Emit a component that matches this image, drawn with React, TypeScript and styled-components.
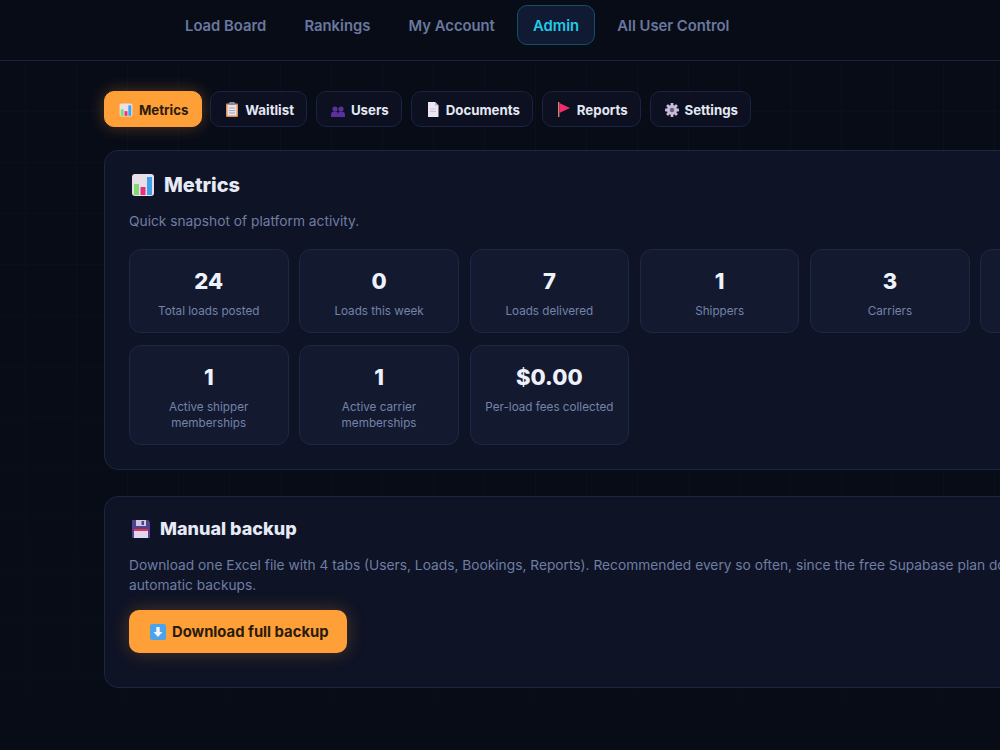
import styled, { createGlobalStyle } from 'styled-components';

const GlobalStyle = createGlobalStyle`
	html, body {
		margin: 0;
		height: 100%;
		overflow: hidden;
		background: #080c17;
	}
	body {
		font-family: Inter, "Liberation Sans", sans-serif;
	}
`;

const Shell = styled.div`
	width: 1000px;
	height: 750px;
	overflow: hidden;
	background-color: #080c17;
`;

const TopBar = styled.nav`
	height: 60px;
	box-sizing: content-box;
	display: flex;
	align-items: flex-start;
	gap: 6px;
	padding-left: 169px;
	background: #080c17;
	border-bottom: 1px solid #1a2342;
`;

const NavLink = styled.a<{ $active?: boolean }>`
	height: 40px;
	margin-top: 5px;
	box-sizing: border-box;
	display: flex;
	align-items: center;
	padding: 1px 15.1px 0;
	border-radius: 10px;
	font-size: 14.8px;
	font-weight: 600;
	white-space: nowrap;
	color: ${(p) => (p.$active ? '#22cbe8' : '#6a789f')};
	background: ${(p) => (p.$active ? '#111a33' : 'transparent')};
	border: 1px solid ${(p) => (p.$active ? '#12506a' : 'transparent')};
`;

const Main = styled.main`
	height: 689px;
	box-sizing: border-box;
	padding: 30px 0 0 104px;
	background-image: linear-gradient(180deg, transparent 45%, #080c17 95%),
		linear-gradient(90deg, rgba(50, 70, 120, 0.08) 1px, transparent 1px),
		linear-gradient(0deg, rgba(50, 70, 120, 0.03) 1px, transparent 1px);
	background-size: 100% 100%, 51px 51px, 51px 51px;
	background-position: 0 0, 25px 0, 25px 0;
`;

const Tabs = styled.div`
	display: flex;
	gap: 8.6px;
	margin-bottom: 23px;
`;

const Tab = styled.button<{ $active?: boolean }>`
	height: 36px;
	box-sizing: border-box;
	display: flex;
	align-items: center;
	gap: 6px;
	padding: 1px 12.3px 0 14px;
	border-radius: 10px;
	font-family: Inter, sans-serif;
	font-size: 13.28px;
	font-weight: 700;
	white-space: nowrap;
	color: ${(p) => (p.$active ? '#2a1c0c' : '#e4e8f4')};
	background: ${(p) => (p.$active ? '#ff9f38' : '#0c1020')};
	border: 1px solid ${(p) => (p.$active ? '#ff9f38' : '#1a2342')};
	box-shadow: ${(p) => (p.$active ? '0 0 16px rgba(255, 159, 56, 0.3)' : 'none')};
`;

const Panel = styled.section`
	width: 1061px;
	box-sizing: border-box;
	padding: 20px 24px 24px;
	margin-bottom: 26px;
	background: #0e1325;
	border: 1px solid #1c2543;
	border-radius: 14px;
`;

const PanelTitle = styled.h2<{ $small?: boolean }>`
	display: flex;
	align-items: center;
	gap: 9px;
	height: 28px;
	margin: ${(p) => (p.$small ? '-2px' : '0')} 0 0 2px;
	font-family: Inter, sans-serif;
	font-size: ${(p) => (p.$small ? '18px' : '20px')};
	font-weight: 800;
	color: #e6eaf6;
`;

const PanelText = styled.p`
	margin: 12px 0 0;
	font-size: 13.76px;
	line-height: 20.6px;
	color: #6f7da4;
`;

const MetricGrid = styled.div`
	display: grid;
	grid-template-columns: repeat(6, 1fr);
	column-gap: 10.8px;
	row-gap: 12px;
	margin-top: 17px;
`;

const MetricCard = styled.div`
	box-sizing: border-box;
	min-height: 84px;
	padding: 16px 12px 13px;
	text-align: center;
	background: #131a30;
	border: 1px solid #1e2745;
	border-radius: 12px;
`;

const MetricValue = styled.div`
	font-family: Inter, sans-serif;
	font-size: 22px;
	line-height: 30px;
	font-weight: 800;
	color: #eef1fa;
`;

const MetricLabel = styled.div`
	margin-top: 7px;
	font-size: 11.7px;
	line-height: 16px;
	color: #7482a8;
`;

const DownloadButton = styled.button`
	height: 43px;
	display: flex;
	align-items: center;
	gap: 6px;
	margin: 14px 0 10px;
	padding: 1px 18px 0 21px;
	border: none;
	border-radius: 10px;
	font-family: Inter, sans-serif;
	font-size: 14.8px;
	font-weight: 700;
	color: #2a1c0c;
	background: #ff9f38;
	box-shadow: 0 0 18px rgba(255, 159, 56, 0.25);
`;

function ChartIcon({ size }: { size: number }) {
	return (
		<svg width={size} height={size} viewBox="0 0 24 24">
			<rect x="1" y="1" width="22" height="22" rx="3" fill="#e8dfe8" />
			<rect x="3" y="11" width="5" height="11" fill="#7ddc6f" />
			<rect x="9.5" y="14" width="5" height="8" fill="#ef2f7d" />
			<rect x="16" y="4" width="5" height="18" fill="#3fa3ea" />
		</svg>
	);
}

function ClipboardIcon() {
	return (
		<svg width="14" height="15" viewBox="0 0 14 15">
			<rect x="1" y="1.5" width="12" height="13.5" rx="1" fill="#d9925a" />
			<rect x="2.5" y="3" width="9" height="10.5" fill="#e8e2ee" />
			<rect x="4" y="0" width="6" height="3" rx="1" fill="#8b8797" />
			<path d="M4 6h6M4 8.5h6M4 11h6" stroke="#a9a5b8" strokeWidth="1" />
		</svg>
	);
}

function UsersIcon() {
	return (
		<svg width="14" height="14" viewBox="0 0 14 14">
			<circle cx="4" cy="6" r="2.6" fill="#5b2f9e" />
			<circle cx="10" cy="6" r="2.6" fill="#5b2f9e" />
			<path d="M0 14v-2.5C0 9.8 1.5 8.6 4 8.6s3 1.2 3 2.9V14z" fill="#5b2f9e" />
			<path d="M7 14v-2.5c0-1.7.5-2.9 3-2.9s4 1.2 4 2.9V14z" fill="#5b2f9e" />
		</svg>
	);
}

function DocIcon() {
	return (
		<svg width="14" height="15" viewBox="0 0 14 15">
			<path d="M2 0h7l3.5 3.5V15H2z" fill="#ebe6f2" />
			<path d="M9 0l3.5 3.5H9z" fill="#b9b0cc" />
			<path d="M4 7h6M4 9.5h6" stroke="#c9c2d8" strokeWidth="1" />
		</svg>
	);
}

function FlagIcon() {
	return (
		<svg width="14" height="15" viewBox="0 0 14 15">
			<rect x="1" y="0" width="1.4" height="15" fill="#c98a6a" />
			<path d="M2.4 1l10.6 5-10.6 5z" fill="#f02c6c" />
		</svg>
	);
}

function GearIcon() {
	return (
		<svg width="14" height="14" viewBox="0 0 14 14">
			<g fill="#c8bcd6">
				<circle cx="7" cy="7" r="5" />
				<rect x="5.6" y="0" width="2.8" height="14" rx="0.6" />
				<rect x="0" y="5.6" width="14" height="2.8" rx="0.6" />
				<rect x="5.6" y="0" width="2.8" height="14" rx="0.6" transform="rotate(45 7 7)" />
				<rect x="5.6" y="0" width="2.8" height="14" rx="0.6" transform="rotate(-45 7 7)" />
			</g>
			<circle cx="7" cy="7" r="2.2" fill="#6b5f85" />
		</svg>
	);
}

function FloppyIcon() {
	return (
		<svg width="20" height="20" viewBox="0 0 20 20">
			<path d="M2 1h15l2 2v15a1 1 0 0 1-1 1H2a1 1 0 0 1-1-1V2a1 1 0 0 1 1-1z" fill="#53408f" />
			<rect x="5" y="1" width="10" height="6" fill="#cfc8dc" />
			<rect x="10.5" y="2" width="2.5" height="4" fill="#53408f" />
			<rect x="3" y="10" width="14" height="9" fill="#e2d6ee" />
			<rect x="3" y="10" width="14" height="2" fill="#e8304f" />
		</svg>
	);
}

function ArrowDownIcon() {
	return (
		<svg width="16" height="16" viewBox="0 0 16 16">
			<rect width="16" height="16" rx="2" fill="#4ba3ea" />
			<path d="M6.3 3h3.4v5H12.5L8 13 3.5 8h2.8z" fill="#f2f5fb" />
		</svg>
	);
}

const tabs = [
	{ label: 'Metrics', icon: <ChartIcon size={14} />, active: true },
	{ label: 'Waitlist', icon: <ClipboardIcon /> },
	{ label: 'Users', icon: <UsersIcon /> },
	{ label: 'Documents', icon: <DocIcon /> },
	{ label: 'Reports', icon: <FlagIcon /> },
	{ label: 'Settings', icon: <GearIcon /> }
];

// the sixth card runs off the right edge, nothing of its text is visible
const metrics = [
	{ value: '24', label: 'Total loads posted' },
	{ value: '0', label: 'Loads this week' },
	{ value: '7', label: 'Loads delivered' },
	{ value: '1', label: 'Shippers' },
	{ value: '3', label: 'Carriers' },
	{ value: '', label: '' },
	{ value: '1', label: 'Active shipper memberships' },
	{ value: '1', label: 'Active carrier memberships' },
	{ value: '$0.00', label: 'Per-load fees collected' }
];

export default function App() {
	return (
		<Shell>
			<GlobalStyle />
			<TopBar>
				<NavLink>Load Board</NavLink>
				<NavLink>Rankings</NavLink>
				<NavLink>My Account</NavLink>
				<NavLink $active>Admin</NavLink>
				<NavLink>All User Control</NavLink>
			</TopBar>
			<Main>
				<Tabs>
					{tabs.map((t) => (
						<Tab key={t.label} $active={t.active}>
							{t.icon}
							{t.label}
						</Tab>
					))}
				</Tabs>
				<Panel>
					<PanelTitle>
						<ChartIcon size={24} />
						Metrics
					</PanelTitle>
					<PanelText>Quick snapshot of platform activity.</PanelText>
					<MetricGrid>
						{metrics.map((m, i) => (
							<MetricCard key={i}>
								<MetricValue>{m.value}</MetricValue>
								<MetricLabel>{m.label}</MetricLabel>
							</MetricCard>
						))}
					</MetricGrid>
				</Panel>
				<Panel>
					<PanelTitle $small>
						<FloppyIcon />
						Manual backup
					</PanelTitle>
					<PanelText>
						Download one Excel file with 4 tabs (Users, Loads, Bookings, Reports). Recommended every so often, since the free Supabase plan doesn't do
						<br />
						automatic backups.
					</PanelText>
					<DownloadButton>
						<ArrowDownIcon />
						Download full backup
					</DownloadButton>
				</Panel>
			</Main>
		</Shell>
	);
}
